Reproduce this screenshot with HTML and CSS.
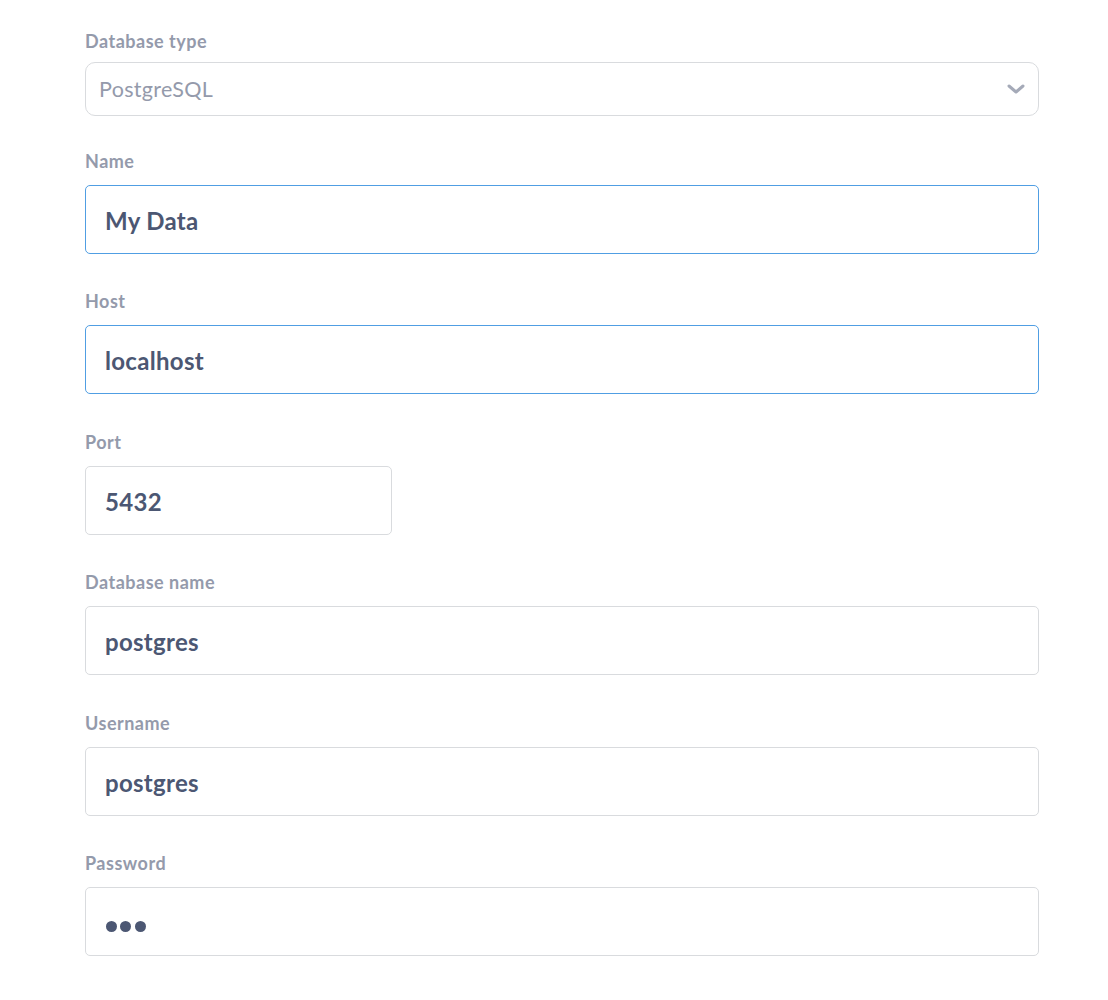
FILE: index.html
```html
<!DOCTYPE html>
<html>
<head>
<meta charset="utf-8">
<link rel="stylesheet" href="styles.css">
</head>
<body>
<form class="form">
  <div class="field field-first">
    <label class="label">Database type</label>
    <div class="select">
      <span class="select-value">PostgreSQL</span>
      <svg class="chevron" width="18" height="10" viewBox="0 0 18 10"><path d="M2 2 L9 8 L16 2" fill="none" stroke="#a5aab8" stroke-width="3" stroke-linecap="round" stroke-linejoin="round"/></svg>
    </div>
  </div>
  <div class="field">
    <label class="label">Name</label>
    <input class="input input-focus" type="text" value="My Data">
  </div>
  <div class="field">
    <label class="label">Host</label>
    <input class="input input-focus" type="text" value="localhost">
  </div>
  <div class="field">
    <label class="label">Port</label>
    <input class="input input-small" type="text" value="5432">
  </div>
  <div class="field">
    <label class="label">Database name</label>
    <input class="input" type="text" value="postgres">
  </div>
  <div class="field">
    <label class="label">Username</label>
    <input class="input" type="text" value="postgres">
  </div>
  <div class="field">
    <label class="label">Password</label>
    <div class="input password"><span class="dot"></span><span class="dot"></span><span class="dot"></span></div>
  </div>
</form>
</body>
</html>
```
FILE: styles.css
```css
html, body {
  margin: 0;
  padding: 0;
  background: #ffffff;
}
body {
  font-family: Lato, "Noto Sans", sans-serif;
}
.form {
  width: 954px;
  padding: 31px 0 0 85px;
  display: flex;
  flex-direction: column;
}
.field {
  display: flex;
  flex-direction: column;
  margin-bottom: 37.4px;
}
.field-first {
  margin-bottom: 35px;
}
.label {
  display: block;
  font-size: 18px;
  line-height: 20px;
  font-weight: 700;
  letter-spacing: 0.5px;
  color: #949aab;
  margin-bottom: 14px;
}
.field-first .label {
  margin-bottom: 11px;
}
.select {
  box-sizing: border-box;
  height: 54px;
  border: 1px solid #d9dbde;
  border-radius: 10px;
  display: flex;
  align-items: center;
  justify-content: space-between;
  padding: 0 13px 0 13px;
}
.select-value {
  font-size: 21.5px;
  letter-spacing: 0.3px;
  color: #949aab;
}
.chevron {
  display: block;
}
.input {
  box-sizing: border-box;
  height: 69px;
  width: 954px;
  border: 1px solid #d9dbde;
  border-radius: 5px;
  padding: 2px 19px 0;
  font-family: Lato, "Noto Sans", sans-serif;
  font-size: 24px;
  font-weight: 700;
  letter-spacing: 0.3px;
  color: #4c5773;
  background: #fff;
  outline: none;
  margin: 0;
}
.input-focus {
  border-color: #509ee3;
}
.input-small {
  width: 307px;
}
.password {
  display: flex;
  align-items: center;
  gap: 3.3px;
  padding: 10px 20px 0;
}
.dot {
  width: 11px;
  height: 11px;
  border-radius: 50%;
  background: #4c5773;
}
```
